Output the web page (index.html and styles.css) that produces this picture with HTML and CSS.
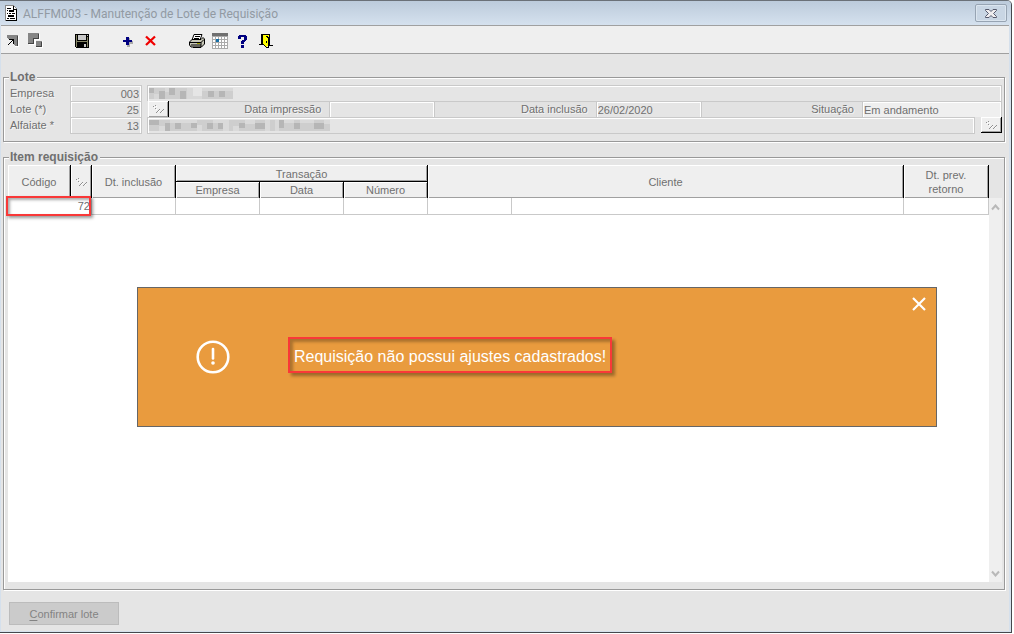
FILE: index.html
```html
<!DOCTYPE html>
<html lang="pt-BR">
<head>
<meta charset="utf-8">
<title>ALFFM003 - Manutenção de Lote de Requisição</title>
<link rel="stylesheet" href="styles.css">
</head>
<body>
<div class="window">
  <header class="titlebar">
    <svg class="doc-icon" width="14" height="16" viewBox="0 0 14 16" shape-rendering="crispEdges"><path fill="#fff" stroke="#888" d="M1.500.5h8l3 3v12h-11z"/><path fill="#000" d="M3 3h4v1H3zM3 5h1v1H3zM5 5h5v2H5zM3 8h1v1H3zM5 8h2v1H5zM8 8h3v1H8zM4 10h6v2H4zM3 13h2v1H3zM6 13h5v1H6zM12 4h1v12H2v-1h10zM9 1h1v3h3v1H9z"/></svg>
    <h1 class="title">ALFFM003 - Manutenção de Lote de Requisição</h1>
    <button class="win-close" aria-label="Fechar janela"><svg width="12" height="9" viewBox="0 0 12 9"><path d="M.5.5h3.500L6 2.500 8 .5h3.500v1L8.500 4.500l3 3v1H8L6 6.500 4 8.500H.5v-1l3-3-3-3z" fill="#f0eef0" stroke="#55596c"/></svg></button>
  </header>
  <nav class="toolbar">
    <button class="tool" aria-label="Abrir"><svg viewBox="0 0 16 16" shape-rendering="crispEdges"><path fill="#858585" d="M2 2h11v11h-3l-2-2V7H5L2 5z"/><path fill="#444" d="M12 3h1v10h-1z"/><path fill="#000" d="M4 6h5v5H8V8H7v1H6v1H5v1H4v1H3v-1h1v-1h1V9h1V8h1V7H4z"/><path fill="#fff" d="M13 3h1v11h-4v-1h3z"/></svg></button>
    <button class="tool" aria-label="Hierarquia"><svg viewBox="0 0 16 16" shape-rendering="crispEdges"><path fill="#fff" d="M1 1h11v6H8v5H1zM8 8h7v7H8z"/><path fill="#858585" d="M0 0h11v6H6v5H0zM8 8h6v6H8z"/><path fill="#444" d="M10 1h1v5H6v5H0v-1h5V5h5zM13 9h1v5H8v-1h5z"/></svg></button>
    <span class="tool-gap"></span>
    <button class="tool" aria-label="Salvar"><svg viewBox="0 0 16 16" shape-rendering="crispEdges"><path d="M1 1h14v14H2l-1-1z"/><path fill="#858565" d="M2 2h1v12H2zM13 4h1v10h-1zM3 8h10v1H3z"/><path fill="#c8c8c8" d="M4 2h8v5H4zM10 11h2v3h-2zM13 2h1v1h-1z"/></svg></button>
    <span class="tool-gap"></span>
    <button class="tool" aria-label="Incluir"><svg viewBox="0 0 16 16" shape-rendering="crispEdges"><path fill="#aaa" d="M7 5h3v3h3v3h-3v3H7z"/><path fill="#000080" d="M6 4h3v3h3v2H9v3H6V9H3V7h3z"/></svg></button>
    <button class="tool" aria-label="Excluir"><svg viewBox="0 0 16 16"><path stroke="#f00000" stroke-width="2.300" d="M3 3.500l9 8.500M12 3.500L3 12"/></svg></button>
    <span class="tool-gap"></span>
    <button class="tool" aria-label="Imprimir"><svg viewBox="0 0 16 16"><path d="M5 1.500h8L11 7H3z" fill="#fff" stroke="#000"/><path d="M6 3.500h5M5 5.500h5" stroke="#000"/><path d="M3 6.500h9l2-2 1.500 1.500v5l-3 3H2l-1.500-2V9z" fill="#c8c8b8" stroke="#000"/><path d="M1 9.500h11l3-3M2 12h10M12 9v5M4 14.500h8" stroke="#000" fill="none"/><path d="M8 10.500h3" stroke="#a0a000"/></svg></button>
    <button class="tool" aria-label="Calendário"><svg viewBox="0 0 16 16" shape-rendering="crispEdges"><path fill="#aaa" d="M0 0h16v16H0z"/><path fill="#707070" d="M0 0h16v3H0z"/><path fill="#fff" d="M1 4h2v2H1zm3 0h2v2H4zm3 0h2v2H7zm3 0h2v2h-2zm3 0h2v2h-2zM1 7h2v2H1zm3 0h2v2H4zm3 0h2v2H7zm3 0h2v2h-2zm3 0h2v2h-2zM1 10h2v2H1zm3 0h2v2H4zm3 0h2v2H7zm3 0h2v2h-2zm3 0h2v2h-2zM1 13h2v2H1zm3 0h2v2H4zm3 0h2v2H7zm3 0h2v2h-2zm3 0h2v2h-2z"/><path fill="#1670a8" d="M4 6h3v3H4z"/></svg></button>
    <button class="tool" aria-label="Ajuda"><svg viewBox="0 0 16 16" shape-rendering="crispEdges"><path fill="#000080" d="M4 2h7v1h1v4h-1v1h-1v1H9v2H6V8h1V7h2V4H6v2H3V3h1zM6 12h3v3H6z"/></svg></button>
    <button class="tool" aria-label="Sair"><svg viewBox="0 0 16 16" shape-rendering="crispEdges"><path d="M3 1h9v11h3v1h-4V2H4v10H1v-1h2z"/><path fill="#ff0" d="M5 2h6v9l-2 3-4-3z"/><path d="M4 2h1v9h1v1h1v1h1v1h2v1H8v-1H7v-1H6v-1H4zM10 4h1v11h-1V5H9V4H8V3h2zM8 8h1v2H8z"/></svg></button>
  </nav>
  <main class="content">
    <fieldset class="group">
      <legend class="heading">Lote</legend>
      <div class="row">
        <label class="caption" for="empresa">Empresa</label>
        <input class="field code" id="empresa" value="003" readonly>
        <div class="field wide"><svg class="masked" width="84" height="11" viewBox="0 0 84 11" shape-rendering="crispEdges"><path fill="#cecece" d="M0 0h38v11H0zM53 3h31v8H53z"/><path fill="#b6b6b6" d="M0 0h5v5H0zM10 3h6v8h-6zM20 0h6v7h-6zM31 3h6v8h-6zM59 3h6v6h-6zM70 3h6v6h-6z"/><path fill="#d8d8d8" d="M5 6h5v5H5zM16 0h4v4h-4zM38 0h6v11h-6zM44 8h9v3h-9zM53 0h31v3H53z"/></svg></div>
      </div>
      <div class="row">
        <label class="caption" for="lote">Lote (*)</label>
        <input class="field code" id="lote" value="25" readonly>
        <button class="pick" aria-label="Buscar lote"><svg class="dots" width="11" height="8" viewBox="0 0 11 8"><use href="#dots"/></svg></button>
        <label class="caption inner" for="impressao">Data impressão</label>
        <input class="field date" id="impressao" readonly>
        <label class="caption inner" for="inclusao">Data inclusão</label>
        <input class="field date" id="inclusao" value="26/02/2020" readonly>
        <label class="caption inner" for="situacao">Situação</label>
        <input class="field status" id="situacao" value="Em andamento" readonly>
      </div>
      <div class="row last">
        <label class="caption" for="alfaiate">Alfaiate *</label>
        <input class="field code" id="alfaiate" value="13" readonly>
        <div class="field wide"><svg class="masked" width="181" height="11" viewBox="0 0 181 11" shape-rendering="crispEdges"><path fill="#cecece" d="M0 0h181v11H0z"/><path fill="#b6b6b6" d="M0 0h10v5H0zM16 3h5v8h-5zM26 3h6v6h-6zM42 3h6v5h-6zM58 3h6v6h-6zM69 3h5v6h-5zM90 3h6v5h-6zM106 3h10v6h-10zM130 0h5v8h-5zM145 3h6v6h-6zM165 3h10v6h-10z"/><path fill="#dadada" d="M10 6h6v5h-6zM21 0h27v3H21zM48 5h5v6h-5zM64 0h10v3H64zM74 0h6v11h-6zM84 6h6v5h-6zM96 0h10v4H96zM116 0h5v11h-5zM126 0h4v11h-4zM135 0h10v3h-10zM151 0h14v3h-14zM175 0h6v4h-6z"/></svg></div>
        <button class="pick end" aria-label="Buscar alfaiate"><svg class="dots" width="11" height="8" viewBox="0 0 11 8"><use href="#dots"/></svg></button>
      </div>
    </fieldset>

    <section class="group items">
      <h2 class="heading">Item requisição</h2>
      <div class="grid">
        <div class="sheet">
          <table class="table">
            <colgroup><col class="w-code"><col class="w-pick"><col class="w-std"><col class="w-std"><col class="w-std"><col class="w-std"><col class="w-std"><col><col class="w-last"></colgroup>
            <thead>
              <tr><th rowspan="2">Código</th><th rowspan="2"><svg class="dots" width="11" height="8" viewBox="0 0 11 8"><g id="dots" shape-rendering="crispEdges"><path fill="#909090" d="M0 1h1v1H0zM2 0h1v1H2zM2 3h1v1H2zM3 7h1v1H3zM4 6h1v1H4zM5 5h1v1H5zM6 4h1v1H6zM7 7h1v1H7zM8 6h1v1H8zM9 5h1v1H9zM10 4h1v1h-1z"/><path fill="#fff" d="M1 2h1v1H1zM3 1h1v1H3zM3 4h1v1H3zM5 6h1v1H5zM6 5h1v1H6zM9 6h1v1H9z"/></g></svg></th><th rowspan="2">Dt. inclusão</th><th class="over" colspan="3">Transação</th><th colspan="2" rowspan="2">Cliente</th><th rowspan="2">Dt. prev.<br>retorno</th></tr>
              <tr><th>Empresa</th><th>Data</th><th>Número</th></tr>
            </thead>
            <tbody>
              <tr><td class="num" colspan="2">72<span class="mark"></span></td><td></td><td></td><td></td><td></td><td></td><td></td><td></td></tr>
            </tbody>
          </table>
        </div>
        <div class="scrollbar">
          <svg width="9" height="7" viewBox="0 0 9 7"><path d="M1 5.500l3.500-4 3.500 4" fill="none" stroke="#b8b8b8" stroke-width="2"/></svg>
          <svg width="9" height="7" viewBox="0 0 9 7"><path d="M1 1.500l3.500 4 3.500-4" fill="none" stroke="#b8b8b8" stroke-width="2"/></svg>
        </div>
      </div>
    </section>
    <button class="confirm" disabled><u>C</u>onfirmar lote</button>
  </main>
  <section class="alert" role="alertdialog" aria-label="Aviso">
    <svg class="warn" width="34" height="34" viewBox="0 0 34 34"><circle cx="17" cy="17" r="15.300" fill="none" stroke="#fff" stroke-width="2.600"/><path d="M17 9v9.500" stroke="#fff" stroke-width="2.600" stroke-linecap="round"/><circle cx="17" cy="23" r="1.800" fill="#fff"/></svg>
    <p class="message">Requisição não possui ajustes cadastrados!</p>
    <button class="dismiss" aria-label="Fechar aviso"><svg width="14" height="14" viewBox="0 0 14 14"><path d="M1 1l12 12M13 1L1 13" stroke="#fff" stroke-width="2.200"/></svg></button>
  </section>
</div>
</body>
</html>
```
FILE: styles.css
```css
* { box-sizing: border-box; }
body {
  margin: 0;
  background: #fff;
  color: #707070;
  font: 11px/14px "Liberation Sans", Arial, sans-serif;
}
button, input { font: inherit; color: inherit; margin: 0; padding: 0; border: 0; border-radius: 0; }
button { display: flex; align-items: center; justify-content: center; background: none; }
svg { display: block; flex: none; }

.window {
  position: relative;
  display: flex;
  flex-direction: column;
  min-height: calc(100vh - 1px);
  margin-right: 2px;
  border-top: 1px solid #6b7178;
  border-right: 1px solid #45484d;
  border-bottom: 1px solid #45484d;
  border-top-right-radius: 5px;
  background: #d5e0ec;
  overflow: hidden;
}
.titlebar {
  display: flex;
  align-items: center;
  height: 24px;
  padding: 0 4px;
  background: linear-gradient(#bccbdb, #d5e1ee);
}
.title {
  flex: 1;
  margin: 0 0 0 5px;
  padding-top: 1px;
  color: #929aa3;
  font: 400 12px/14px Roboto, "Liberation Sans", sans-serif;
}
.win-close {
  width: 32px;
  height: 18px;
  border: 1px solid #97a4b3;
  border-radius: 2px;
  background: #c9d6e4;
  box-shadow: inset 0 0 0 1px #dbe5ef;
}
.toolbar {
  display: flex;
  align-items: center;
  height: 29px;
  margin: 0 2px 0 1px;
  padding-top: 2px;
  border-top: 1px solid #a0a0a0;
  border-bottom: 1px solid #a0a0a0;
  background: #efefef;
}
.tool, .tool-gap { width: 23px; height: 24px; }
.tool svg { width: 16px; height: 16px; }
.content {
  flex: 1;
  display: flex;
  flex-direction: column;
  margin: 0 2px 1px 1px;
  padding: 16px 4px 6px 2px;
  background: #e5e5e5;
}

.group {
  min-width: 0;
  margin: 0 0 8px;
  padding: 1px 2px 7px 6px;
  border: 1px solid #999;
  box-shadow: inset 1px 1px 0 #fff, 1px 1px 0 #fff;
}
.heading {
  margin: 0 0 0 -1px;
  padding: 0 2px 0 1px;
  background: #e5e5e5;
  font-size: 12px;
  line-height: 14px;
  font-weight: 700;
}
.row { display: flex; height: 16px; }
.row.last { height: 17px; }
.caption { width: 60px; flex: none; padding-top: 1px; white-space: nowrap; text-shadow: 1px 1px 0 #f4f4f4; }
.field {
  height: 100%;
  min-width: 0;
  border: 1px solid #c9c9c9;
  border-bottom-width: 0;
  background: #e5e5e5;
  box-shadow: inset 1px 1px 0 #fff, inset -1px 0 0 #fff;
  padding: 1px 2px 0 1px;
  outline: 0;
}
.row.last .field { border-bottom-width: 1px; }
.code { width: 72px; flex: none; margin-right: 5px; text-align: right; }
.wide { flex: 1; }
.masked { margin: 1px 0 0; }
.pick {
  width: 21px;
  flex: none;
  margin-left: 1px;
  border: solid #000;
  border-width: 0 1px 0 0;
  background: #efefef;
  box-shadow: inset 1px 1px 0 #fff, inset -1px -1px 0 #a0a0a0;
}
.pick.end { height: 16px; margin-left: 6px; border-width: 0 1px 1px 0; }
.inner {
  flex: 1 1 160px;
  width: auto;
  padding: 0 8px 0 0;
  border-top: 1px solid #c9c9c9;
  background: #e2e2e2;
  text-align: right;
}
.date { flex: none; width: 106px; }
.status { flex: none; width: 140px; background: #efefef; }

.items {
  flex: 1;
  display: flex;
  flex-direction: column;
  align-items: stretch;
  margin: 7px 0 12px;
  padding-top: 0;
}
.items .heading { align-self: flex-start; margin: -8px 0 1px -1px; }
.grid { flex: 1; display: flex; margin-left: -2px; min-width: 0; }
.sheet { flex: 1; min-width: 0; background: linear-gradient(#fff, #fff); }
.scrollbar {
  display: flex;
  flex-direction: column;
  justify-content: space-between;
  align-items: center;
  width: 13px;
  margin-top: 33px;
  padding: 6px 0 5px;
  background: #efefef;
}
.table { width: 100%; table-layout: fixed; border-collapse: separate; border-spacing: 0; }
.w-code { width: 63px; }
.w-pick { width: 21px; }
.w-std { width: 84px; }
.w-last { width: 85px; }
.table th {
  height: 16px;
  padding: 0;
  border-right: 1px solid #000;
  background: #efefef;
  box-shadow: inset 1px 1px 0 #fff, inset -1px -1px 0 #a0a0a0;
  font-weight: 400;
}
.table th.over { height: 17px; padding-top: 1px; border-bottom: 1px solid #000; }
.table th .dots { margin: 0 auto; }
.table td {
  height: 17px;
  padding: 0;
  border-right: 1px solid #c9c9c9;
  border-bottom: 1px solid #c9c9c9;
}
.table .num { position: relative; padding-right: 1px; text-align: right; }
.mark {
  position: absolute;
  inset: -2px 0 -2px -2px;
  border: 2px solid #f93838;
  box-shadow: 2px 2px 3px #0006, inset 2px 2px 3px #0005;
}
.confirm {
  align-self: flex-start;
  width: 110px;
  height: 23px;
  margin-left: 6px;
  border: 1px solid #bcbcbc;
  background: #cbcbcb;
  color: #838383;
}
.confirm u { text-underline-offset: 2px; }

.alert {
  position: absolute;
  top: 286px;
  left: 137px;
  right: 74px;
  display: flex;
  align-items: center;
  min-height: 140px;
  padding-left: 58px;
  border: 1px solid #666;
  background: #e99b3e;
}
.message {
  margin: 0 0 4px 58px;
  padding: 9px 4px 5px;
  border: 2px solid #f93838;
  box-shadow: 3px 3px 3px #0005, inset 3px 3px 3px #0004;
  color: #fff;
  font-size: 16px;
  line-height: 18px;
}
.dismiss { position: absolute; top: 9px; right: 10px; }
```
